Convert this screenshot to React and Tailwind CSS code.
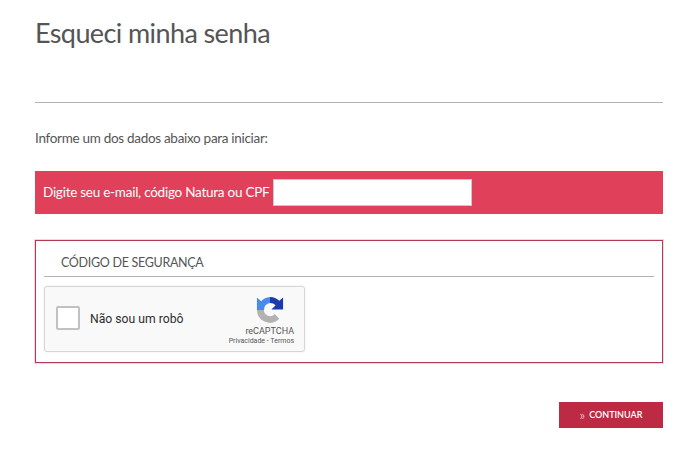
import React from 'react';

const RecaptchaLogo = () => (
  <svg width="28" height="28" viewBox="0 0 30 30" fill="none">
    {/* cinza, base */}
    <path d="M1 15H8.5A6.5 6.5 0 0 0 20 19.2L25 24.5A14 14 0 0 1 1 15Z" fill="#b2b2b2" />
    {/* azul claro, esquerda */}
    <path d="M1 1.5L5.5 5.5A14 14 0 0 1 15 1V7.5A7 7 0 0 0 8.5 15H1Z" fill="#4a8af0" />
    {/* azul escuro, topo direito */}
    <path d="M15 1A14 14 0 0 1 25 5.2L29 1.5V14.5H16.5L21 10A8 8 0 0 0 15 7.5Z" fill="#1c3aa9" />
  </svg>
);

export default function App() {
  return (
    <div className="min-h-[456px] bg-white pl-[35px] pr-[37px] font-['Lato',sans-serif] text-[#555555]">
      <h1 className="pt-[15px] text-[27px] leading-[36px] tracking-[-0.6px]">Esqueci minha senha</h1>

      <div className="mt-[51px] border-t border-[#b4b4b4]" />

      <p className="mt-[25px] text-[13.5px] leading-[20px] tracking-[-0.3px]">Informe um dos dados abaixo para iniciar:</p>

      <div className="mt-[23px] flex h-[43px] items-center bg-[#e0405a] pl-[8px] text-[13.5px] tracking-[-0.25px] text-white">
        <label>Digite seu e-mail, código Natura ou CPF</label>
        <input className="ml-[4px] h-[27px] w-[199px] border border-[#c9c9c9] bg-white" />
      </div>

      <div className="mt-[26px] h-[123px] border border-[#b23a52] px-[8px] shadow-[0_0_0_1px_rgba(190,60,85,0.2)]">
        <div className="flex h-[36px] items-end border-b border-[#b4b4b4] pb-[3px] pl-[17px] text-[12.5px] tracking-[-0.3px]">
          CÓDIGO DE SEGURANÇA
        </div>

        <div className="mt-[9px] flex h-[66px] w-[261px] rounded-[3px] border border-[#d6d6d6] bg-[#f9f9f9] font-['Roboto',sans-serif] shadow-[0_0_3px_rgba(0,0,0,0.08)]">
          <div className="ml-[11px] mt-[19px] size-[24px] rounded-[2px] border-2 border-[#c1c1c1] bg-white" />
          <span className="ml-[10px] mt-[24px] text-[12.2px] leading-[16px] text-[#2e2e2e]">Não sou um robô</span>
          <div className="ml-auto mr-[10px] flex flex-col items-end">
            <div className="mr-[10px] mt-[9px] h-[28px]">
              <RecaptchaLogo />
            </div>
            <span className="mt-[2px] text-[9px] leading-[11px] text-[#555555]">reCAPTCHA</span>
            <span className="text-[7px] leading-[9px] text-[#555555]">Privacidade - Termos</span>
          </div>
        </div>
      </div>

      <div className="mt-[39px] flex justify-end">
        <button className="flex h-[26px] w-[104px] items-center justify-center gap-[4px] bg-[#bd2a43] text-[9px] font-semibold text-white">
          <span className="text-[13px] font-normal leading-none text-[#f3a7b5]">»</span>
          CONTINUAR
        </button>
      </div>
    </div>
  );
}
